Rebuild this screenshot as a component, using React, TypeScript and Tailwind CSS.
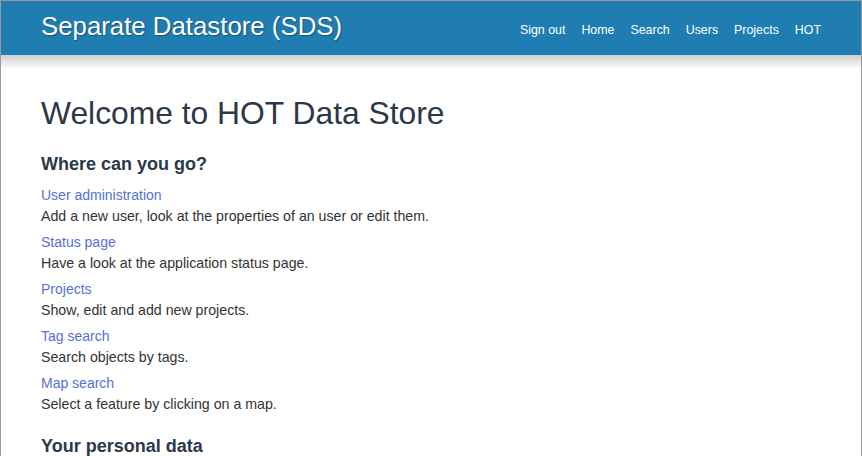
import React from "react";

const items = [
  { link: "User administration", desc: "Add a new user, look at the properties of an user or edit them." },
  { link: "Status page", desc: "Have a look at the application status page." },
  { link: "Projects", desc: "Show, edit and add new projects." },
  { link: "Tag search", desc: "Search objects by tags." },
  { link: "Map search", desc: "Select a feature by clicking on a map." },
];

export default function App() {
  return (
    <div className="w-[862px] h-[456px] overflow-hidden bg-white border-t border-l border-r border-[#9a9a9a] font-['Liberation_Sans',Arial,sans-serif]">
      <div className="h-[54px] bg-[#207db2] flex items-center justify-between pl-[40px] pr-[40px]">
        <div className="text-white text-[25.8px] leading-none [text-shadow:1px_1px_1px_rgba(0,0,0,0.35)] pb-[2px]">
          Separate Datastore (SDS)
        </div>
        <nav className="flex items-center gap-[16px] text-white text-[12.4px] pt-[5px]">
          <span>Sign out</span>
          <span>Home</span>
          <span>Search</span>
          <span>Users</span>
          <span>Projects</span>
          <span>HOT</span>
        </nav>
      </div>
      <div className="h-[14px] bg-gradient-to-b from-[#cfcfcf] to-white" />
      <main className="px-[40px]">
        <h1 className="text-[31.8px] leading-[40px] text-[#2b3848] mt-[24px]">Welcome to HOT Data Store</h1>
        <h2 className="text-[18px] font-bold leading-[24px] text-[#2b3848] mt-[19px] mb-[9px]">Where can you go?</h2>
        {items.map((it) => (
          <div key={it.link} className="mb-[6px]">
            <div className="text-[14px] leading-[21px] text-[#5571d6]">{it.link}</div>
            <div className="text-[14.2px] leading-[20px] text-[#333333]">{it.desc}</div>
          </div>
        ))}
        <h2 className="text-[18px] font-bold leading-[24px] text-[#2b3848] mt-[20px]">Your personal data</h2>
      </main>
    </div>
  );
}
